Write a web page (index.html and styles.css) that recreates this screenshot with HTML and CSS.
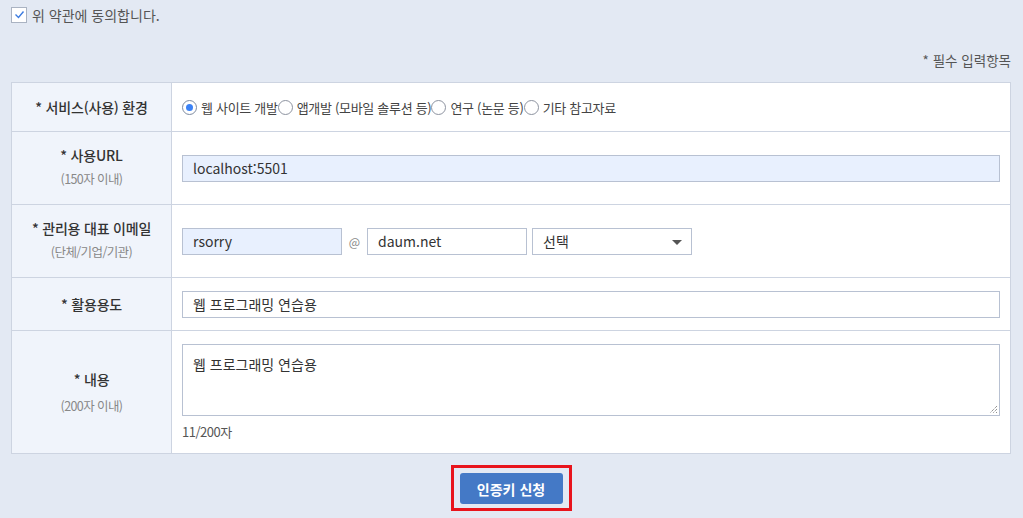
FILE: index.html
```html
<!DOCTYPE html>
<html lang="ko">
<head>
    <meta charset="UTF-8">
    <title>인증키 신청</title>
    <link rel="stylesheet" href="styles.css">
</head>
<body>
    <div class="wrap">
        <label class="agree">
            <span class="check"><svg width="11" height="9" viewBox="0 0 11 9"><path d="M1.5 4.5 L4.5 7.5 L9.5 1.5" fill="none" stroke="#3b7be0" stroke-width="1.4"/></svg></span>
            위 약관에 동의합니다.
        </label>

        <p class="required">* 필수 입력항목</p>

        <table class="form">
            <tr class="row-env">
                <th>* 서비스(사용) 환경</th>
                <td>
                    <div class="radios">
                        <label><span class="radio on"></span>웹 사이트 개발</label>
                        <label><span class="radio"></span>앱개발 (모바일 솔루션 등)</label>
                        <label><span class="radio"></span>연구 (논문 등)</label>
                        <label><span class="radio"></span>기타 참고자료</label>
                    </div>
                </td>
            </tr>
            <tr class="row-mid">
                <th>* 사용URL<span class="sub">(150자 이내)</span></th>
                <td><div class="input filled wide">localhost:5501</div></td>
            </tr>
            <tr class="row-mid">
                <th>* 관리용 대표 이메일<span class="sub">(단체/기업/기관)</span></th>
                <td>
                    <div class="email">
                        <div class="input filled small">rsorry</div>
                        <span class="at">@</span>
                        <div class="input small">daum.net</div>
                        <div class="input small select">선택<span class="arrow"></span></div>
                    </div>
                </td>
            </tr>
            <tr class="row-use">
                <th>* 활용용도</th>
                <td><div class="input wide">웹 프로그래밍 연습용</div></td>
            </tr>
            <tr class="row-text">
                <th>* 내용<span class="sub">(200자 이내)</span></th>
                <td>
                    <div class="textarea">웹 프로그래밍 연습용
                        <svg class="grip" width="9" height="9" viewBox="0 0 9 9"><path d="M8 1 L1 8 M8 4 L4 8 M8 7 L7 8" stroke="#666" stroke-width="1" stroke-dasharray="1 1"/></svg>
                    </div>
                    <div class="count">11/200자</div>
                </td>
            </tr>
        </table>

        <div class="actions">
            <div class="highlight"><button>인증키 신청</button></div>
        </div>
    </div>
</body>
</html>
```

FILE: styles.css
```css
body{
    margin: 0;
    background: #e3e9f3;
    font-family: "Noto Sans CJK KR", "Noto Sans", sans-serif;
    color: #333;
}

.wrap{
    width: 1000px;
    margin-left: 11px;
}

.agree{
    display: flex;
    align-items: center;
    gap: 5px;
    height: 15px;
    padding-top: 7px;
    font-size: 14px;
    color: #555;
}

.check{
    width: 14px;
    height: 14px;
    border: 1px solid #aab3c2;
    background: #fff;
    display: flex;
    align-items: center;
    justify-content: center;
}

.required{
    margin: 0;
    padding-top: 30px;
    height: 30px;
    text-align: right;
    font-size: 13.5px;
    line-height: 16px;
    color: #555;
}

.form{
    width: 1000px;
    border-collapse: collapse;
    background: #fff;
    border: 1px solid #cdd4e1;
}

.form th,
.form td{
    border: 1px solid #cdd4e1;
    padding: 0;
}

.form th{
    width: 159px;
    background: #f0f4fb;
    font-size: 14px;
    font-weight: 500;
    color: #333;
    text-align: center;
    letter-spacing: -0.2px;
}

.form td{
    padding-left: 10px;
}

.sub{
    display: block;
    margin-top: 4px;
    font-size: 12.5px;
    font-weight: 400;
    color: #888;
    letter-spacing: -0.6px;
}

.row-env{ height: 49px; }
.row-mid{ height: 73px; }
.row-use{ height: 53px; }
.row-text{ height: 123px; }

.row-mid th{ padding-bottom: 4px; }
.row-text .sub{ margin-top: 7px; }

.radios{
    display: flex;
    align-items: center;
    font-size: 13px;
    color: #444;
    letter-spacing: -0.3px;
}

.radios label{
    display: flex;
    align-items: center;
    gap: 4px;
}

.radio{
    width: 13px;
    height: 13px;
    border: 1px solid #8d93a0;
    border-radius: 50%;
    background: #fff;
    position: relative;
}

.radio.on{
    border-color: #7d8aa0;
}

.radio.on::after{
    content: "";
    position: absolute;
    left: 3px;
    top: 3px;
    width: 7px;
    height: 7px;
    border-radius: 50%;
    background: #3b82f6;
}

.input{
    box-sizing: border-box;
    height: 27px;
    border: 1px solid #b8c1d2;
    background: #fff;
    padding-left: 10px;
    font-size: 14px;
    line-height: 25px;
    color: #333;
}

.input.filled{
    background: #e8f0fe;
}

.input.wide{
    width: 818px;
}

.email{
    display: flex;
    align-items: center;
}

.input.small{
    width: 160px;
}

.at{
    font-size: 12px;
    color: #888;
    width: 25px;
    text-align: center;
}

.select{
    margin-left: 5px;
    position: relative;
}

.arrow{
    position: absolute;
    right: 9px;
    top: 11px;
    border-left: 5px solid transparent;
    border-right: 5px solid transparent;
    border-top: 5px solid #555;
}

.textarea{
    position: relative;
    box-sizing: border-box;
    width: 818px;
    height: 72px;
    border: 1px solid #b8c1d2;
    padding: 9px 10px;
    font-size: 14px;
    line-height: 20px;
    margin-top: 1px;
}

.grip{
    position: absolute;
    right: 1px;
    bottom: 1px;
}

.count{
    margin-top: 6px;
    font-size: 13px;
    color: #555;
    letter-spacing: -0.5px;
}

.actions{
    display: flex;
    justify-content: center;
    padding-top: 11px;
}

.highlight{
    border: 3px solid #e8141c;
    padding: 5px 6px 4px;
}

button{
    display: block;
    width: 103px;
    height: 31px;
    border: none;
    border-radius: 3px;
    background: #4479c6;
    color: #fff;
    font-family: "Noto Sans CJK KR", sans-serif;
    font-size: 14px;
    font-weight: 700;
}
```
